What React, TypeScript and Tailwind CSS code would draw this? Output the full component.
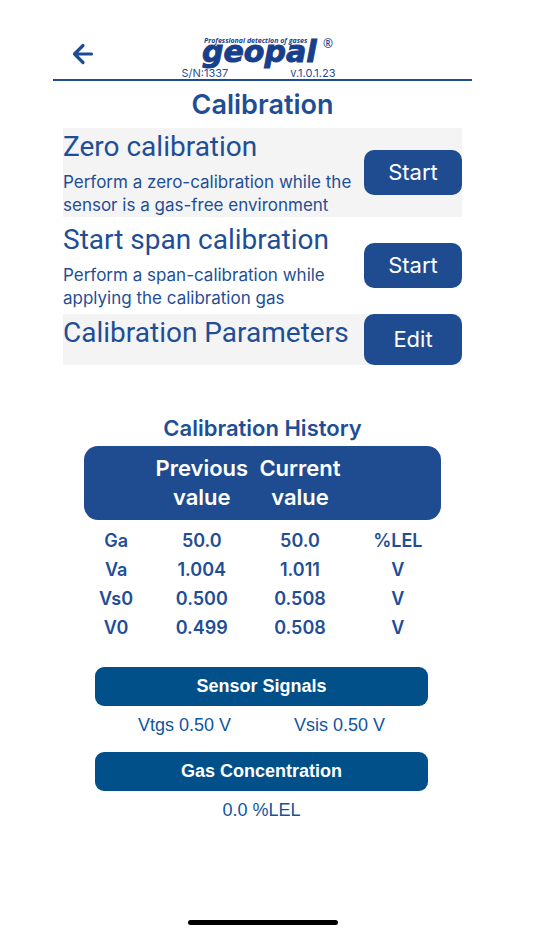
import { clsx } from "clsx";

const ACTIONS = [
  {
    title: "Zero calibration",
    lines: ["Perform a zero-calibration while the", "sensor is a gas-free environment"],
    button: "Start",
    shaded: true,
  },
  {
    title: "Start span calibration",
    lines: ["Perform a span-calibration while", "applying the calibration gas"],
    button: "Start",
    shaded: false,
  },
  { title: "Calibration Parameters", lines: [], button: "Edit", shaded: true },
];

const HISTORY = [
  { name: "Ga", previous: "50.0", current: "50.0", unit: "%LEL" },
  { name: "Va", previous: "1.004", current: "1.011", unit: "V" },
  { name: "Vs0", previous: "0.500", current: "0.508", unit: "V" },
  { name: "V0", previous: "0.499", current: "0.508", unit: "V" },
];

function Logo() {
  return (
    <svg viewBox="0 0 134 34" className="h-[34px] w-[134px] self-end overflow-visible" fill="#183f8c" role="img" aria-label="geopal">
      <text x="2" y="9" className="font-['Open_Sans'] text-[7px] font-bold italic">
        Professional detection of gases
      </text>
      <text x="0" y="28" stroke="#183f8c" strokeWidth="1" className="font-['DejaVu_Sans'] text-[30px] font-bold italic">
        geopal
      </text>
      <text x="121" y="14" className="font-['Open_Sans'] text-[12px] font-semibold">
        ®
      </text>
    </svg>
  );
}

function Header() {
  return (
    <header className="grid grid-cols-[1fr_154px_1fr] items-start border-b-2 border-[#1f4c90] pr-2">
      <button type="button" aria-label="Back" className="mt-2 ml-[18px] w-6 text-[#1f4c90]">
        <svg viewBox="0 0 24 24" className="size-6" fill="none" stroke="currentColor" strokeWidth="3.2" strokeLinecap="round" strokeLinejoin="round">
          <path d="M20.5 12H3.5M12 3.5L3.5 12L12 20.5" />
        </svg>
      </button>
      <div className="flex flex-col">
        <Logo />
        <div className="flex justify-between text-[11px] leading-[11px]">
          <span>S/N:1337</span>
          <span>v.1.0.1.23</span>
        </div>
      </div>
    </header>
  );
}

function ActionRow({ title, lines, button, shaded }: (typeof ACTIONS)[number]) {
  const hasText = lines.length > 0;
  return (
    <section className={clsx("flex items-center justify-between", shaded && "bg-[#f4f4f4]")}>
      <div className="flex flex-col gap-[5px] self-start whitespace-nowrap">
        <h2 className="font-['Roboto'] text-[28px] leading-[38px]">{title}</h2>
        {hasText && (
          <p className="text-[17px] leading-[23px]">
            {lines[0]}
            <br />
            {lines[1]}
          </p>
        )}
      </div>
      <button
        type="button"
        className={clsx("w-[98px] shrink-0 rounded-[10px] bg-[#1f4c90] text-[22px] text-white", hasText ? "h-[45px]" : "h-[51px]")}
      >
        {button}
      </button>
    </section>
  );
}

function HistoryTable() {
  return (
    <table className="w-full table-fixed text-center font-semibold">
      <thead className="text-[22px] leading-[29px] text-white">
        <tr className="h-[74px]">
          <th className="w-[18%] rounded-l-[14px] bg-[#1f4c90]" />
          <th className="w-[30%] bg-[#1f4c90] font-semibold">Previous value</th>
          <th className="w-[25%] bg-[#1f4c90] font-semibold">Current value</th>
          <th className="w-[27%] rounded-r-[14px] bg-[#1f4c90]" />
        </tr>
      </thead>
      <tbody className="text-[18px] leading-[29px] before:block before:h-1.5">
        {HISTORY.map((row) => (
          <tr key={row.name}>
            <td>{row.name}</td>
            <td>{row.previous}</td>
            <td>{row.current}</td>
            <td className="pl-2.5">{row.unit}</td>
          </tr>
        ))}
      </tbody>
    </table>
  );
}

function Bar({ children }: { children: string }) {
  return (
    <h3 className="rounded-[9px] bg-[#01508a] text-center leading-[39px] font-bold text-white">
      {children}
    </h3>
  );
}

export default function App() {
  return (
    <div className="flex min-h-screen flex-col bg-white pt-[34px] pr-[62px] pl-[53px] font-['Inter','Liberation_Sans',sans-serif] text-[#1f4e96]">
      <Header />
      <main className="flex flex-col">
        <h1 className="pt-1.5 text-center text-[27px] leading-9 font-semibold">Calibration</h1>
        <div className="mt-[5px] flex flex-col gap-1 px-2.5">
          {ACTIONS.map((action) => (
            <ActionRow key={action.title} {...action} />
          ))}
        </div>

        <section className="mt-[45px] px-[31px]">
          <h2 className="text-center text-[22px] leading-9 font-semibold">Calibration History</h2>
          <HistoryTable />
        </section>

        <section className="mt-[25px] pr-[44px] pl-[42px] font-['Liberation_Sans',Arial,sans-serif] text-[18px] leading-[39px] text-[#0f55a0]">
          <Bar>Sensor Signals</Bar>
          <div className="flex justify-center gap-[63px]">
            <span>Vtgs 0.50 V</span>
            <span>Vsis 0.50 V</span>
          </div>
          <div className="mt-[7px]">
            <Bar>Gas Concentration</Bar>
          </div>
          <p className="text-center">0.0 %LEL</p>
        </section>
      </main>
      <div className="mt-auto mb-[25px] h-[5px] w-[150px] self-center rounded-full bg-black" />
    </div>
  );
}
